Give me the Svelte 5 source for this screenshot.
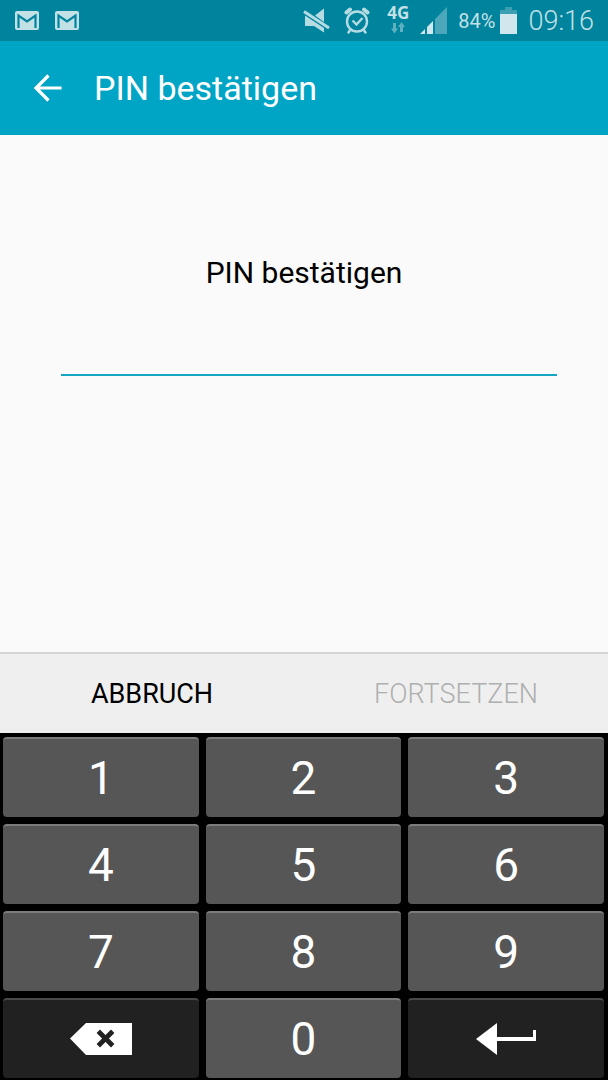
<script lang="ts">
  const PIN_LENGTH = 4;

  const digits = ['1', '2', '3', '4', '5', '6', '7', '8', '9'];

  let pin = $state('');
  let complete = $derived(pin.length >= PIN_LENGTH);

  function press(digit: string) {
    pin += digit;
  }

  function erase() {
    pin = pin.slice(0, -1);
  }

  function clear() {
    pin = '';
  }
</script>

{#snippet mail()}
  <svg width="24" height="20" viewBox="0 0 24 20" role="img" aria-label="Gmail">
    <rect x="0" y="0" width="24" height="19" rx="2" fill="#c2e1e7" />
    <path d="M3.500 17V4.500L12 10.500L20.500 4.500V17" fill="none" stroke="#00839c" stroke-width="2.200" />
  </svg>
{/snippet}

<div class="screen">
  <div class="status">
    <div class="notifications">
      {@render mail()}
      {@render mail()}
    </div>
    <div class="indicators">
      <svg width="28" height="28" viewBox="0 0 28 28" role="img" aria-label="Stumm">
        <path d="M12 8.500L21 1.500V15Z M2 8.500L21 21V25.500L11 19H2Z" fill="#b5dbe3" />
        <path d="M1 4.500L26 21" stroke="#b5dbe3" stroke-width="3" />
      </svg>
      <svg width="30" height="28" viewBox="1 0 30 28" role="img" aria-label="Wecker">
        <g fill="none" stroke="#b5dbe3">
          <circle cx="16" cy="14.500" r="10" stroke-width="2.400" />
          <path d="M11.500 13.500L15.500 17.500L21.500 11" stroke-width="2.400" />
          <path d="M5.500 5.500L9 2.500M26.500 5.500L23 2.500" stroke-width="4" stroke-linecap="round" />
          <path d="M9.500 22.500L7.500 25.500M22.500 22.500L24.500 25.500" stroke-width="2.500" stroke-linecap="round" />
        </g>
      </svg>
      <div class="network">
        <span>4G</span>
        <svg width="16" height="12" viewBox="0 0 16 12" aria-hidden="true">
          <path d="M3 1H6V6.500H8L4.500 11.500L1 6.500H3Z M10 10V5H8L11.500 0L15 5H13V10Z" fill="#5fb0c0" />
        </svg>
      </div>
      <svg width="27" height="28" viewBox="0 0 27 28" role="img" aria-label="Signal">
        <path d="M0 27L5 22V27Z M7 27V20L13 14V27Z" fill="#d0e8ed" />
        <path d="M15 27V12L27 0V27Z" fill="#4ba7b9" />
      </svg>
      <div class="battery">
        <span>84%</span>
        <svg width="17" height="28" viewBox="0 0 17 28" role="img" aria-label="Akku">
          <path d="M5 0H12V3H17V7H0V3H5Z" fill="#3c9fb2" />
          <rect x="0" y="7" width="17" height="20" fill="#d0e8ed" />
        </svg>
      </div>
      <time datetime="09:16">09:16</time>
    </div>
  </div>

  <header>
    <button class="back" aria-label="Zurück">
      <svg width="28" height="28" viewBox="0 0 28 28" aria-hidden="true">
        <path d="M14.500 1.500L2 14L14.500 26.500M2 14H27.500" fill="none" stroke="#fff" stroke-width="3.200" />
      </svg>
    </button>
    <h1>PIN bestätigen</h1>
  </header>

  <main>
    <label for="pin">PIN bestätigen</label>
    <input id="pin" type="password" inputmode="none" autocomplete="off" bind:value={pin} />
  </main>

  <div class="actions">
    <button onclick={clear}>ABBRUCH</button>
    <button disabled={!complete}>FORTSETZEN</button>
  </div>

  <div class="keypad">
    {#each digits as digit}
      <button class="key" onclick={() => press(digit)}>{digit}</button>
    {/each}
    <button class="key dark" aria-label="Löschen" onclick={erase}>
      <svg width="64" height="32" viewBox="0 0 64 32" aria-hidden="true">
        <path d="M1 15.500L17 0H63V32H17Z" fill="#fff" />
        <path d="M31 10L42 21M42 10L31 21" stroke="#212121" stroke-width="4.800" stroke-linecap="square" />
      </svg>
    </button>
    <button class="key" onclick={() => press('0')}>0</button>
    <button class="key dark" aria-label="Eingabe" disabled={!complete}>
      <svg width="62" height="32" viewBox="0 0 62 32" aria-hidden="true">
        <path d="M1 16L22 0V14H58V7H61V18H22V32Z" fill="#fff" />
      </svg>
    </button>
  </div>
</div>

<style>
  :global(body) {
    margin: 0;
    background: #fafafa;
  }

  .screen {
    display: flex;
    flex-direction: column;
    min-height: 100vh;
    font-family: Roboto, "Liberation Sans", sans-serif;
    color: #000;
  }

  button {
    margin: 0;
    padding: 0;
    border: 0;
    background: none;
    color: inherit;
    font: inherit;
    cursor: pointer;
  }

  svg {
    display: block;
    flex: none;
  }

  .status {
    display: flex;
    justify-content: space-between;
    align-items: center;
    height: 41px;
    padding: 0 14px 0 15px;
    background: #00839c;
    color: #c2e1e7;
  }

  .notifications {
    display: flex;
    gap: 16px;
  }

  .indicators {
    display: flex;
    align-items: center;
    gap: 11px;
  }

  .network {
    display: flex;
    flex-direction: column;
    align-items: center;
    padding-left: 4px;
    font: 700 17px/18px "Open Sans", sans-serif;
  }

  .network svg {
    margin-bottom: 4px;
  }

  .battery {
    display: flex;
    align-items: center;
    gap: 5px;
    font-size: 20px;
  }

  time {
    font-size: 27px;
    font-weight: 300;
  }

  header {
    display: flex;
    align-items: center;
    gap: 18px;
    height: 94px;
    padding: 0 20px;
    background: #00a5c5;
    color: #fff;
  }

  .back {
    padding: 12px 14px;
  }

  h1 {
    margin: 0;
    font-size: 34px;
    font-weight: 400;
    line-height: 42px;
  }

  main {
    flex: 1;
    display: flex;
    flex-direction: column;
    padding: 117px 51px 0 61px;
  }

  label {
    padding-right: 10px;
    font-size: 30px;
    line-height: 42px;
    text-align: center;
  }

  input {
    height: 82px;
    box-sizing: border-box;
    padding: 32px 8px 0;
    border: 0;
    border-bottom: 2px solid #14a5c2;
    outline: 0;
    background: none;
    font: inherit;
    font-size: 30px;
  }

  .actions {
    display: flex;
    border-top: 2px solid #d6d6d6;
    background: #efefef;
  }

  .actions button {
    flex: 1;
    height: 79px;
    font-size: 27px;
  }

  .actions button:disabled {
    color: #aeb0b0;
    font-weight: 300;
    cursor: default;
  }

  .keypad {
    display: grid;
    grid-template-columns: repeat(3, 1fr);
    gap: 7px;
    padding: 4px 4px 2px 3px;
    background: #000;
  }

  .key {
    height: 80px;
    box-sizing: border-box;
    display: flex;
    align-items: center;
    justify-content: center;
    border-top: 2px solid #7c7c7c;
    border-radius: 4px;
    background: #565656;
    color: #fff;
    font-size: 46px;
  }

  .key:active {
    background: #14a5c2;
  }

  .dark {
    border-top-color: #4a4a4a;
    background: #212121;
  }
</style>
